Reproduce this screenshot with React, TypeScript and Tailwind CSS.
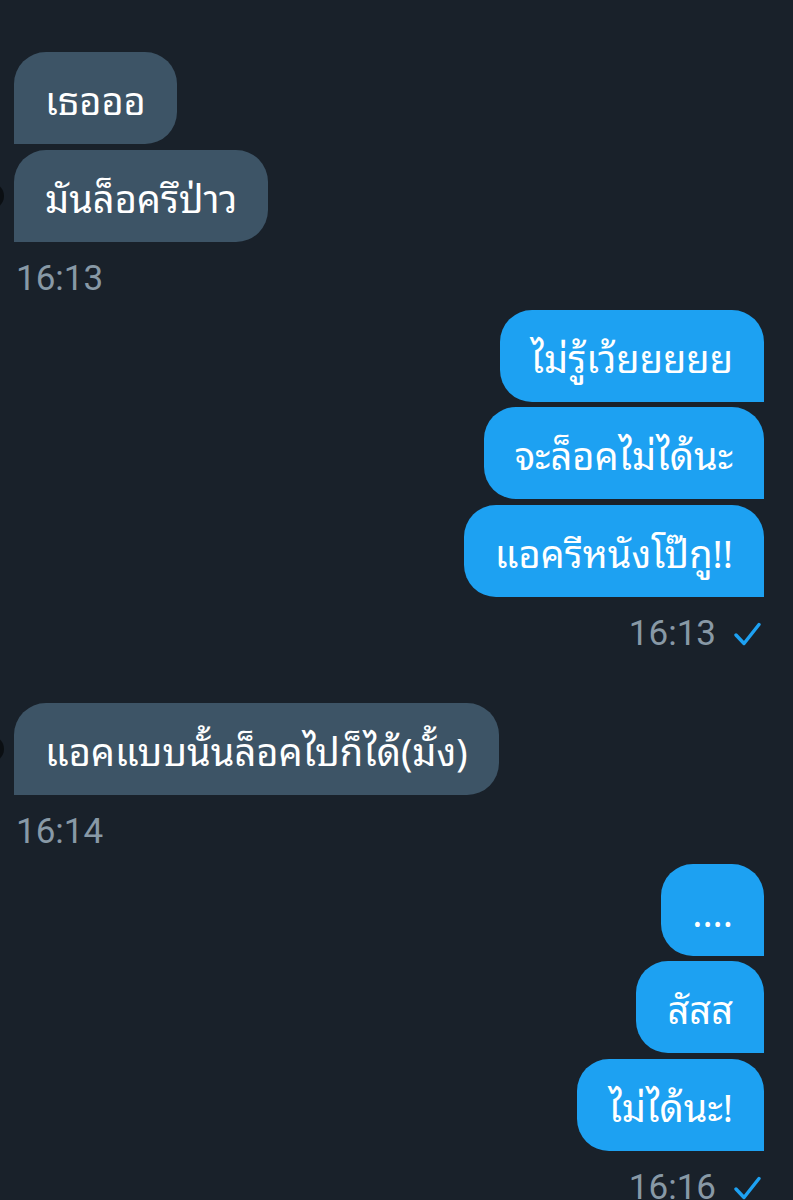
const thai = "font-['Noto_Sans_Thai_Looped','Noto_Sans_Thai','Noto_Sans','DejaVu_Sans',sans-serif]";

function Bubble({ text, side }: { text: string; side: "in" | "out" }) {
  const shape =
    side === "in"
      ? "bg-[#3d5466] rounded-tl-[32px] rounded-tr-[32px] rounded-br-[32px] rounded-bl-none"
      : "bg-[#1da1f2] rounded-tl-[32px] rounded-tr-[32px] rounded-bl-[32px] rounded-br-none";
  return (
    <div className={`${shape} ${thai} px-[31px] py-[20px] text-[38px] leading-[52px] text-white whitespace-nowrap`}>
      {text}
    </div>
  );
}

function Check() {
  return (
    <svg width="28" height="24" viewBox="0 0 28 24" fill="none" className="shrink-0">
      <path d="M2 13 L10 21.5 L25 2.5" stroke="#1da1f2" strokeWidth="3.4" strokeLinecap="round" strokeLinejoin="round" />
    </svg>
  );
}

function Time({ t, sent }: { t: string; sent?: boolean }) {
  return (
    <div className={`flex items-center gap-[18px] ${sent ? "justify-end pr-[2px]" : "pl-[2px]"}`}>
      <span className="font-['Roboto','Liberation_Sans',sans-serif] text-[35px] leading-[42px] text-[#8899a6]">{t}</span>
      {sent && <Check />}
    </div>
  );
}

export default function App() {
  const groups = [
    { side: "in" as const, msgs: ["เธอออ", "มันล็อครึป่าว"], time: "16:13", mt: "mt-[52px]" },
    { side: "out" as const, msgs: ["ไม่รู้เว้ยยยยย", "จะล็อคไม่ได้นะ", "แอครีหนังโป๊กู!!"], time: "16:13", mt: "mt-[10px]" },
    { side: "in" as const, msgs: ["แอคแบบนั้นล็อคไปก็ได้(มั้ง)"], time: "16:14", mt: "mt-[48px]" },
    { side: "out" as const, msgs: ["....", "สัสส", "ไม่ได้นะ!"], time: "16:16", mt: "mt-[11px]" },
  ];

  return (
    <div className="w-[793px] h-[1200px] overflow-hidden bg-[#19212a] pl-[14px] pr-[29px]">
      {groups.map((g, gi) => (
        <div key={gi} className={`${g.mt} flex flex-col`}>
          <div className={`flex flex-col gap-[5.5px] ${g.side === "in" ? "items-start" : "items-end"}`}>
            {g.msgs.map((m, i) => (
              <div key={i} className="relative">
                {g.side === "in" && i === g.msgs.length - 1 && (
                  <div className="absolute left-[-36px] top-1/2 -translate-y-1/2 w-[26px] h-[26px] rounded-full bg-[#0b0f13]" />
                )}
                <Bubble text={m} side={g.side} />
              </div>
            ))}
          </div>
          <div className="mt-[16px]">
            <Time t={g.time} sent={g.side === "out"} />
          </div>
        </div>
      ))}
    </div>
  );
}
